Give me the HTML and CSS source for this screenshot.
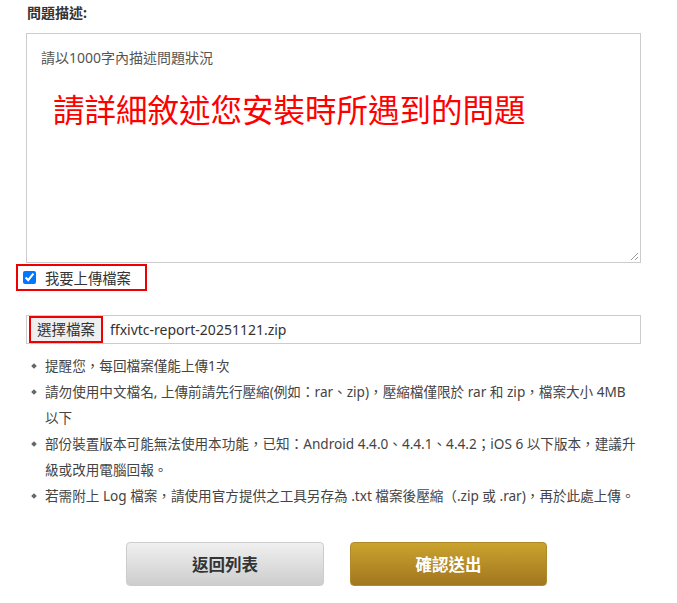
FILE: index.html
```html
<!DOCTYPE html>
<html lang="zh-Hant">
<head>
<meta charset="utf-8">
<title>問題描述</title>
<link rel="stylesheet" href="styles.css">
</head>
<body>
<div class="page">
  <div class="label">問題描述:</div>
  <div class="textarea">
    <div class="placeholder">請以1000字內描述問題狀況</div>
    <div class="note">請詳細敘述您安裝時所遇到的問題</div>
    <svg class="grip" width="10" height="10" viewBox="0 0 10 10"><path d="M9 2 L2 9 M9 6 L6 9" stroke="#999" stroke-width="1" fill="none"/></svg>
  </div>
  <div class="check-row">
    <input type="checkbox" class="check" checked>
    <span>我要上傳檔案</span>
  </div>
  <div class="file">
    <span class="file-btn">選擇檔案</span>
    <span class="file-name">ffxivtc-report-20251121.zip</span>
  </div>
  <ul class="tips">
    <li>提醒您，每回檔案僅能上傳1次</li>
    <li>請勿使用中文檔名, 上傳前請先行壓縮(例如：rar、zip)，壓縮檔僅限於 rar 和 zip，檔案大小 4MB <span class="nw">以下</span></li>
    <li>部份裝置版本可能無法使用本功能，已知：Android 4.4.0、4.4.1、4.4.2；iOS 6 以下版本，建議升級或改用電腦回報。</li>
    <li>若需附上 Log 檔案，請使用官方提供之工具另存為 .txt 檔案後壓縮（.zip 或 .rar)，再於此處上傳。</li>
  </ul>
</div>
<div class="actions">
  <button class="btn btn-back">返回列表</button>
  <button class="btn btn-submit">確認送出</button>
</div>
</body>
</html>
```

FILE: styles.css
```css
body {
  margin: 0;
  font-family: "Noto Sans", "Noto Sans CJK TC", sans-serif;
  font-size: 14px;
  color: #333;
  background: #fff;
}
.page {
  padding: 3px 36px 0 26px;
}
.label {
  font-weight: bold;
  font-size: 14px;
  line-height: 20px;
  margin-left: 1px;
}
.textarea {
  position: relative;
  margin-top: 10px;
  height: 230px;
  border: 1px solid #ccc;
  box-sizing: border-box;
  padding: 14px 14px;
}
.placeholder {
  font-size: 14px;
  line-height: 20px;
  color: #555;
}
.note {
  position: absolute;
  left: 26px;
  top: 56px;
  font-size: 31.5px;
  line-height: 40px;
  color: #f00;
  white-space: nowrap;
}
.grip {
  position: absolute;
  right: 1px;
  bottom: 1px;
}
.check-row {
  display: inline-flex;
  align-items: center;
  gap: 9px;
  margin: 1px 0 0 -10px;
  height: 27px;
  box-sizing: border-box;
  border: 2px solid #e00;
  padding: 0 14px 0 5px;
  font-size: 14.3px;
}
.check {
  margin: 0;
  width: 13px;
  height: 13px;
}
.file {
  display: flex;
  align-items: center;
  margin-top: 24px;
  height: 29px;
  box-sizing: border-box;
  border: 1px solid #ccc;
}
.file-btn {
  margin-left: 2px;
  height: 27px;
  box-sizing: border-box;
  border: 2px solid #e00;
  background: #efefef;
  padding: 0 6px;
  line-height: 23px;
  font-size: 14.5px;
}
.file-name {
  margin-left: 7px;
  font-size: 14px;
}
.tips {
  list-style: none;
  margin: 9px 0 0;
  padding: 0;
}
.tips li {
  position: relative;
  padding-left: 19px;
  line-height: 26px;
  font-size: 13.6px;
  color: #444;
}
.nw {
  white-space: nowrap;
}
.tips li::before {
  content: "";
  position: absolute;
  left: 6px;
  top: 11px;
  width: 4px;
  height: 4px;
  background: #666;
  transform: rotate(45deg);
}
.actions {
  display: flex;
  justify-content: center;
  gap: 26px;
  margin-top: 33px;
  padding-right: 4px;
}
.btn {
  width: 198px;
  height: 44px;
  border-radius: 4px;
  font-family: "Noto Sans", "Noto Sans CJK TC", sans-serif;
  font-size: 16.5px;
  font-weight: bold;
  cursor: pointer;
}
.btn-back {
  border: 1px solid #ccc;
  background: linear-gradient(#f0f0f0, #cdcdcd);
  color: #333;
}
.btn-submit {
  width: 197px;
  border: 1px solid #b08a2a;
  background: linear-gradient(#caa32e, #a27620);
  color: #fff;
}
```
